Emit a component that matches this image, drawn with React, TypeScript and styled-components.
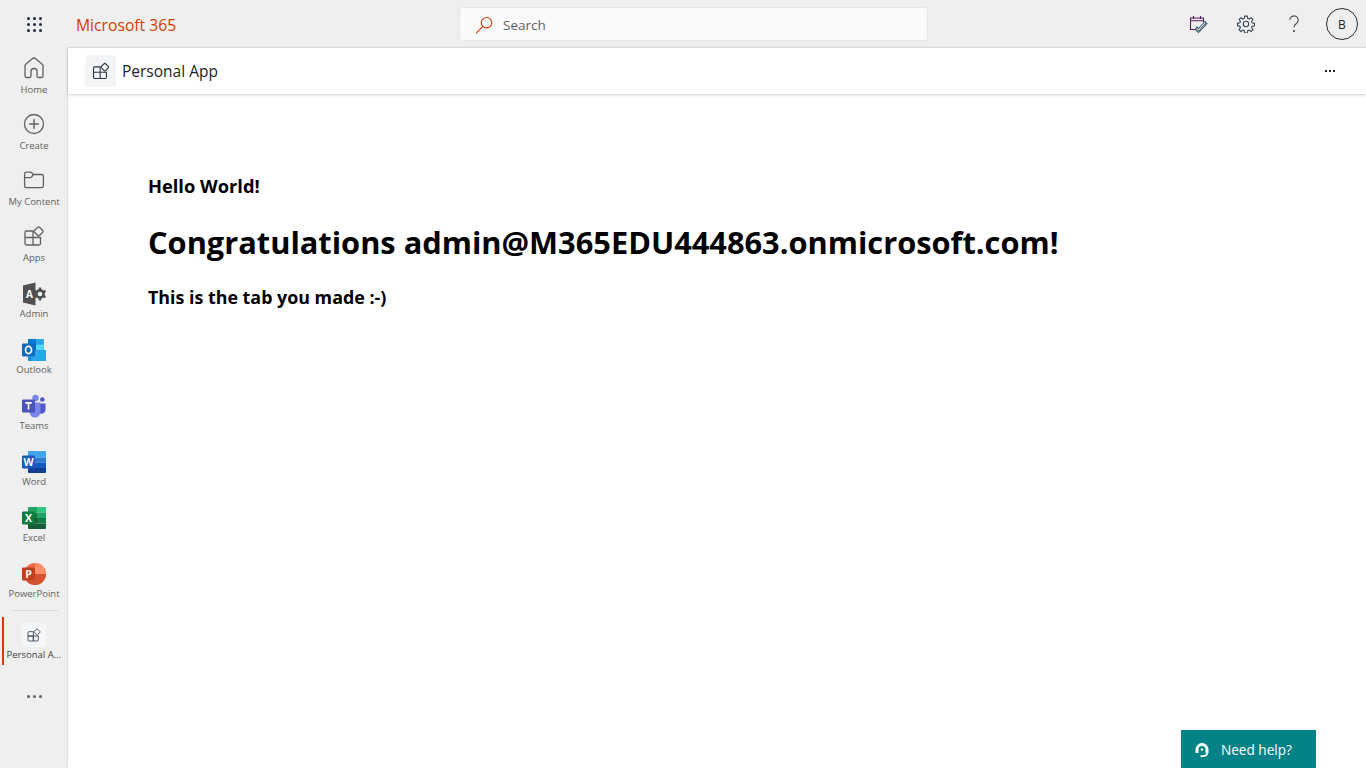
import React from "react";
import styled, { createGlobalStyle } from "styled-components";

const GlobalStyle = createGlobalStyle`
  html, body {
    margin: 0;
    height: 100%;
    background: #efefef;
    font-family: "Open Sans", "Noto Sans", "Liberation Sans", sans-serif;
    overflow: hidden;
  }
  #root { height: 100%; }
  * { box-sizing: border-box; }
`;

const IconHome = () => (
  <svg width="24" height="24" viewBox="0 0 24 24" fill="none" stroke="#616161" strokeWidth="1.3">
    <path d="M10 2.900a3 3 0 0 1 4 0l6.200 5.300c.5.4.8 1 .8 1.600V20a1.500 1.500 0 0 1-1.500 1.500h-3A1.500 1.500 0 0 1 15 20v-4.500a3 3 0 0 0-6 0V20a1.500 1.500 0 0 1-1.500 1.500h-3A1.500 1.500 0 0 1 3 20V9.800c0-.6.3-1.200.8-1.600z" />
  </svg>
);

const IconCreate = () => (
  <svg width="24" height="24" viewBox="0 0 24 24" fill="none" stroke="#616161" strokeWidth="1.3">
    <circle cx="12" cy="12" r="9.500" />
    <path d="M12 7.200v9.600M7.200 12h9.600" strokeWidth="1.500" />
  </svg>
);

const IconFolder = () => (
  <svg width="24" height="24" viewBox="0 0 24 24" fill="none" stroke="#616161" strokeWidth="1.3">
    <path d="M2.600 6a1.800 1.800 0 0 1 1.800-1.800h4.200c.5 0 .9.2 1.200.5l1.600 1.800h8.200a1.800 1.800 0 0 1 1.800 1.800v9.500a1.800 1.800 0 0 1-1.800 1.800H4.400a1.800 1.800 0 0 1-1.800-1.800z" />
    <path d="M2.600 9.600h5.600c.6 0 1-.2 1.400-.6l1.800-2.500" />
  </svg>
);

const IconApps = ({ size = 24, color = "#616161" }: { size?: number; color?: string }) => (
  <svg width={size} height={size} viewBox="0 0 24 24" fill="none" stroke={color} strokeWidth="1.3">
    <path d="M3 8.500A1.500 1.500 0 0 1 4.500 7H11v6.500H3zM3 13.500h8V21H4.500A1.500 1.500 0 0 1 3 19.500zM11 13.500h7.500V19.500A1.500 1.500 0 0 1 17 21h-6z" />
    <rect x="13.100" y="3.900" width="7" height="7" rx="1.200" transform="rotate(45 16.600 7.400)" />
  </svg>
);

const IconAdmin = () => (
  <svg width="24" height="24" viewBox="0 0 24 24">
    <path d="M1 3.500 13.500.5v23L1 20.500z" fill="#505050" />
    <text x="4" y="16" fontSize="10" fontWeight="700" fill="#fff" fontFamily="Open Sans, sans-serif">A</text>
    <circle cx="18" cy="12" r="3.600" fill="none" stroke="#505050" strokeWidth="2.600" />
    <path d="M18 5.500v2.500M18 16v2.500M12.500 8.800l2 1.200M21.500 14l2 1.200M12.500 15.200l2-1.200M21.500 10l2-1.200" stroke="#505050" strokeWidth="2.400" />
  </svg>
);

const IconOutlook = () => (
  <svg width="24" height="24" viewBox="0 0 24 24">
    <path d="M6 1h14.500c.5 0 1 .4 1 1v10H6z" fill="#0078d4" />
    <rect x="14" y="1" width="7.500" height="5.500" fill="#28a8ea" />
    <rect x="14" y="6.500" width="7.500" height="6" fill="#50d9ff" />
    <rect x="6" y="6.500" width="8" height="6" fill="#0364b8" />
    <path d="M6 12.500 24 12v10a1 1 0 0 1-1 1H7a1 1 0 0 1-1-1z" fill="#1490df" />
    <path d="M9 14l15-2v10a1 1 0 0 1-1 1H9z" fill="#28a8ea" />
    <rect x="0" y="5.500" width="13" height="13" rx="1" fill="#0f6cbd" />
    <ellipse cx="6.500" cy="12" rx="3" ry="3.600" fill="none" stroke="#fff" strokeWidth="1.700" />
  </svg>
);

const IconTeams = () => (
  <svg width="24" height="24" viewBox="0 0 24 24">
    <circle cx="20.300" cy="5.500" r="2.300" fill="#5059c9" />
    <path d="M16.500 9.500h7V16a3.800 3.800 0 0 1-7 2z" fill="#5059c9" />
    <circle cx="13.500" cy="4" r="3.200" fill="#7b83eb" />
    <path d="M7.500 8.500h11v9.500a5.500 5.500 0 0 1-11 0z" fill="#7b83eb" />
    <rect x="0" y="5.500" width="13" height="13" rx="1" fill="#4b53bc" />
    <path d="M3.300 8.800h6.400M6.500 8.800v6.600" stroke="#fff" strokeWidth="1.700" />
  </svg>
);

const OfficeTile = ({ letter, tile }: { letter: string; tile: string }) => (
  <>
    <rect x="0" y="5.500" width="13" height="13" rx="1" fill={tile} />
    <text x="6.500" y="15.800" fontSize="10.500" fontWeight="700" fill="#fff" textAnchor="middle" fontFamily="Open Sans, sans-serif">
      {letter}
    </text>
  </>
);

const IconWord = () => (
  <svg width="24" height="24" viewBox="0 0 24 24">
    <path d="M7 1h16a1 1 0 0 1 1 1v5.500H6V2a1 1 0 0 1 1-1z" fill="#41a5ee" />
    <rect x="6" y="7.500" width="18" height="5" fill="#2b7cd3" />
    <rect x="6" y="12.500" width="18" height="5.500" fill="#185abd" />
    <path d="M6 18h18v4a1 1 0 0 1-1 1H7a1 1 0 0 1-1-1z" fill="#103f91" />
    <OfficeTile letter="W" tile="#185abd" />
  </svg>
);

const IconExcel = () => (
  <svg width="24" height="24" viewBox="0 0 24 24">
    <path d="M7 1h8v5.500H6V2a1 1 0 0 1 1-1z" fill="#21a366" />
    <path d="M15 1h8a1 1 0 0 1 1 1v4.500h-9z" fill="#33c481" />
    <rect x="6" y="6.500" width="9" height="5.500" fill="#107c41" />
    <rect x="15" y="6.500" width="9" height="5.500" fill="#21a366" />
    <rect x="6" y="12" width="9" height="5.500" fill="#185c37" />
    <rect x="15" y="12" width="9" height="5.500" fill="#107c41" />
    <path d="M6 17.500h18V22a1 1 0 0 1-1 1H7a1 1 0 0 1-1-1z" fill="#185c37" />
    <OfficeTile letter="X" tile="#107c41" />
  </svg>
);

const IconPowerPoint = () => (
  <svg width="24" height="24" viewBox="0 0 24 24">
    <circle cx="13" cy="12" r="11" fill="#ed6c47" />
    <path d="M13 1a11 11 0 0 1 11 11H13z" fill="#ff8f6b" />
    <path d="M2 12h22a11 11 0 0 1-22 0z" fill="#d35230" />
    <OfficeTile letter="P" tile="#c43e1c" />
  </svg>
);

const IconSearch = () => (
  <svg width="18" height="18" viewBox="0 0 18 18" fill="none" stroke="#d83b01" strokeWidth="1.100">
    <circle cx="11.500" cy="6.700" r="5.200" />
    <path d="M7.800 10.400 1 17.300" />
  </svg>
);

const IconPlanner = () => (
  <svg width="20" height="20" viewBox="0 0 20 20" fill="none">
    <path d="M7.500 15.500H2.500V4h13v4" stroke="#5c1a5e" strokeWidth="1.100" />
    <path d="M2.500 6.800h13M5.500 2v3M12.500 2v3" stroke="#5c1a5e" strokeWidth="1.100" />
    <path d="M8 14.500l2.500 2.500 7.500-8" stroke="#8a5a2a" strokeWidth="1" />
    <path d="M7.500 15.500 10.500 18.500 19 9.500 17 7.500 10.500 14.500 9 13z" stroke="#2f5f7f" strokeWidth="1.100" />
  </svg>
);

const IconGear = () => (
  <svg width="18" height="18" viewBox="0 0 24 24" fill="none" stroke="#3b4a5a" strokeWidth="1.500">
    <circle cx="12" cy="12" r="3.600" />
    <path d="M10.300 1.500h3.400l.6 3.100 1.900.8 2.600-1.800 2.400 2.400-1.800 2.600.8 1.900 3.100.6v3.400l-3.100.6-.8 1.900 1.800 2.600-2.400 2.400-2.600-1.800-1.900.8-.6 3.100h-3.400l-.6-3.100-1.900-.8-2.600 1.800-2.400-2.400 1.800-2.600-.8-1.900-3.100-.6v-3.400l3.100-.6.8-1.900-1.800-2.600 2.400-2.400 2.600 1.800 1.900-.8z" />
  </svg>
);

const IconHelp = () => (
  <svg width="20" height="20" viewBox="0 0 20 20" fill="none" stroke="#4a4a4a" strokeWidth="1.100">
    <path d="M5.800 6a4.200 4.200 0 1 1 7 3.200c-1.500 1.300-2.800 2-2.800 4.200" />
    <circle cx="10" cy="17" r=".5" fill="#4a4a4a" />
  </svg>
);

const IconHeadset = () => (
  <svg width="14" height="14" viewBox="0 0 14 14" fill="#fff">
    <path d="M7 0a6.500 6.500 0 0 1 6.500 6.500V10h-3V6.500a3.500 3.500 0 0 0-7 0V10h-3V6.500A6.500 6.500 0 0 1 7 0z" />
    <path d="M11.500 9.500h1.800c0 3-2.300 4.500-5.800 4.500h-2v-1.800h2c2.500 0 4-1 4-2.700z" />
    <circle cx="7" cy="6.500" r="1.200" />
  </svg>
);

const Shell = styled.div`
  display: grid;
  grid-template-columns: 68px 1fr;
  grid-template-rows: 48px 1fr;
  height: 100vh;
`;

const Header = styled.header`
  grid-column: 1 / 3;
  display: flex;
  align-items: center;
  padding-right: 8px;
`;

const Waffle = styled.div`
  flex: 0 0 68px;
  display: flex;
  justify-content: center;
`;

const WaffleGrid = styled.div`
  display: grid;
  grid-template-columns: repeat(3, 3px);
  gap: 3px;
`;

const WaffleDot = styled.span`
  width: 3px;
  height: 3px;
  border-radius: 50%;
  background: #1b2a3a;
`;

const Brand = styled.div`
  flex: 0 0 391px;
  padding: 2px 0 0 8px;
  font-size: 15.700px;
  font-weight: 500;
  color: #d83b01;
`;

const SearchBox = styled.div`
  width: 469px;
  height: 34px;
  display: flex;
  align-items: center;
  gap: 10px;
  padding: 1px 0 0 15px;
  background: #fafafa;
  border: 1px solid #e6e6e6;
  border-radius: 4px;
  font-size: 13.500px;
  color: #616161;
`;

const Actions = styled.div`
  margin-left: auto;
  display: flex;
  align-items: center;
`;

const ActionButton = styled.div`
  width: 48px;
  display: flex;
  justify-content: center;
`;

const Avatar = styled.div`
  width: 32px;
  height: 32px;
  margin-left: 8px;
  border: 1px solid #2b2b2b;
  border-radius: 50%;
  display: flex;
  align-items: center;
  justify-content: center;
  font-size: 12px;
  color: #242424;
`;

const Rail = styled.nav`
  display: flex;
  flex-direction: column;
  align-items: stretch;
  padding-top: 8px;
`;

const RailGroup = styled.div`
  display: flex;
  flex-direction: column;
  gap: 15px;
`;

const RailItem = styled.div<{ $active?: boolean }>`
  position: relative;
  display: flex;
  flex-direction: column;
  align-items: center;
  height: ${(p) => (p.$active ? "48px" : "41px")};
  padding-top: ${(p) => (p.$active ? "6px" : "0")};

  ${(p) =>
    p.$active &&
    `&::before {
      content: "";
      position: absolute;
      left: 2px;
      top: 0;
      bottom: 0;
      width: 2px;
      background: #d83b01;
    }`}
`;

const RailIcon = styled.div<{ $logo?: boolean }>`
  width: 24px;
  height: 24px;
  display: flex;
  align-items: center;
  justify-content: center;
  ${(p) => p.$logo && "transform: translateY(2px);"}
`;

const RailTile = styled(RailIcon)`
  background: #f5f6f8;
  border-radius: 4px;
`;

const RailLabel = styled.span`
  margin-top: 2px;
  max-width: 60px;
  font-size: 9.500px;
  line-height: 16px;
  color: #616161;
  white-space: nowrap;
  overflow: hidden;
  text-overflow: ellipsis;
`;

const ActiveLabel = styled(RailLabel)`
  margin-top: 0;
  max-width: 55px;
  color: #424242;
`;

const RailDivider = styled.div`
  height: 1px;
  margin: 9px 10px 6px;
  background: #dcdcdc;
`;

const MoreDots = styled.div`
  margin-top: 30px;
  display: flex;
  justify-content: center;
  gap: 3px;
`;

const MoreDot = styled.span`
  width: 3px;
  height: 3px;
  border-radius: 50%;
  background: #616161;
`;

const Main = styled.main`
  background: #fff;
  box-shadow: 0 0 2px rgba(0, 0, 0, 0.2);
  min-width: 0;
`;

const AppBar = styled.div`
  height: 46px;
  display: flex;
  align-items: center;
  gap: 6px;
  padding: 0 31px 0 17px;
  box-shadow: 0 1px 3px rgba(0, 0, 0, 0.2);
`;

const AppTile = styled.div`
  width: 31px;
  height: 32px;
  display: flex;
  align-items: center;
  justify-content: center;
  background: #f3f4f6;
  border-radius: 4px;
`;

const AppTitle = styled.div`
  font-size: 15.500px;
  font-weight: 500;
  color: #242424;
`;

const BarDots = styled.div`
  margin-left: auto;
  display: flex;
  gap: 2px;
`;

const BarDot = styled.span`
  width: 2px;
  height: 2px;
  background: #242424;
`;

const Content = styled.div`
  padding: 79px 80px 0;
  color: #000;
`;

const Greeting = styled.h3`
  margin: 0;
  font-size: 18.300px;
  line-height: 26px;
  font-weight: 700;
`;

const Congrats = styled.h1`
  margin: 21px 0 0;
  font-size: 30.770px;
  line-height: 44px;
  font-weight: 700;
`;

const Footnote = styled(Greeting)`
  margin-top: 20px;
  font-size: 17.850px;
`;

const HelpButton = styled.div`
  position: fixed;
  right: 50px;
  bottom: 0;
  width: 135px;
  height: 38px;
  display: flex;
  align-items: center;
  gap: 12px;
  padding: 1px 0 0 14px;
  background: #038387;
  color: #fff;
  font-size: 13.600px;
`;

const dots = [0, 1, 2];

const railApps: { label: string; icon: React.ReactNode; logo?: boolean }[] = [
  { label: "Home", icon: <IconHome /> },
  { label: "Create", icon: <IconCreate /> },
  { label: "My Content", icon: <IconFolder /> },
  { label: "Apps", icon: <IconApps /> },
  { label: "Admin", icon: <IconAdmin />, logo: true },
  { label: "Outlook", icon: <IconOutlook />, logo: true },
  { label: "Teams", icon: <IconTeams />, logo: true },
  { label: "Word", icon: <IconWord />, logo: true },
  { label: "Excel", icon: <IconExcel />, logo: true },
  { label: "PowerPoint", icon: <IconPowerPoint />, logo: true },
];

const App = () => (
  <>
    <GlobalStyle />
    <Shell>
      <Header>
        <Waffle>
          <WaffleGrid>
            {[...Array(9).keys()].map((i) => (
              <WaffleDot key={i} />
            ))}
          </WaffleGrid>
        </Waffle>
        <Brand>Microsoft 365</Brand>
        <SearchBox>
          <IconSearch />
          Search
        </SearchBox>
        <Actions>
          <ActionButton>
            <IconPlanner />
          </ActionButton>
          <ActionButton>
            <IconGear />
          </ActionButton>
          <ActionButton>
            <IconHelp />
          </ActionButton>
          <Avatar>B</Avatar>
        </Actions>
      </Header>
      <Rail>
        <RailGroup>
          {railApps.map((app) => (
            <RailItem key={app.label}>
              <RailIcon $logo={app.logo}>{app.icon}</RailIcon>
              <RailLabel>{app.label}</RailLabel>
            </RailItem>
          ))}
        </RailGroup>
        <RailDivider />
        <RailItem $active>
          <RailTile>
            <IconApps size={16} color="#3b4252" />
          </RailTile>
          <ActiveLabel>Personal App</ActiveLabel>
        </RailItem>
        <MoreDots>
          {dots.map((i) => (
            <MoreDot key={i} />
          ))}
        </MoreDots>
      </Rail>
      <Main>
        <AppBar>
          <AppTile>
            <IconApps size={20} color="#2f3645" />
          </AppTile>
          <AppTitle>Personal App</AppTitle>
          <BarDots>
            {dots.map((i) => (
              <BarDot key={i} />
            ))}
          </BarDots>
        </AppBar>
        <Content>
          <Greeting>Hello World!</Greeting>
          <Congrats>Congratulations admin@M365EDU444863.onmicrosoft.com!</Congrats>
          <Footnote>This is the tab you made :-)</Footnote>
        </Content>
      </Main>
    </Shell>
    <HelpButton>
      <IconHeadset />
      Need help?
    </HelpButton>
  </>
);

export default App;
